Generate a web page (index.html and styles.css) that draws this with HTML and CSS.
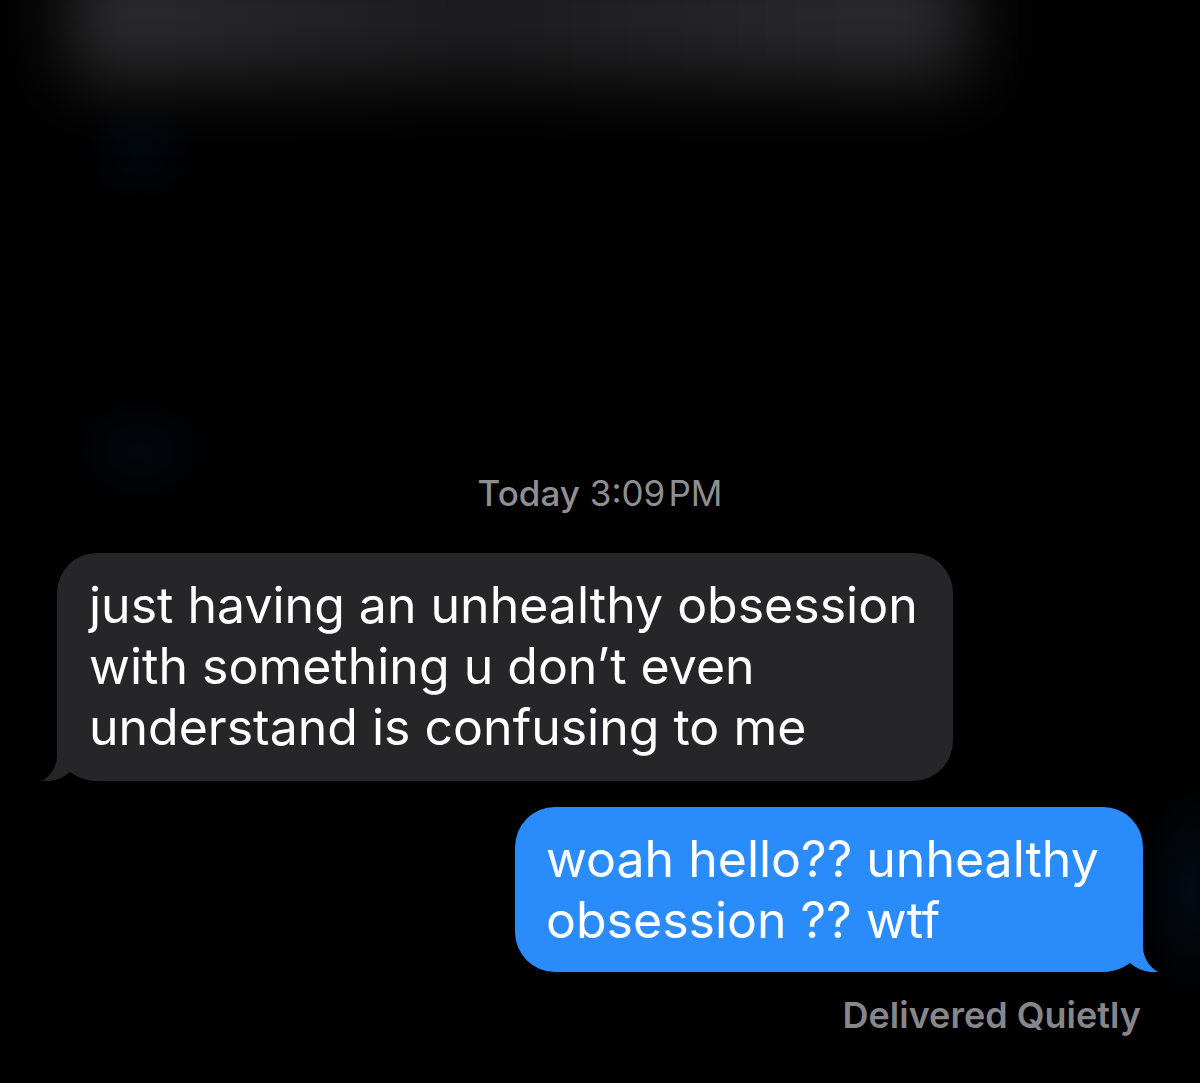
FILE: index.html
```html
<!DOCTYPE html>
<html lang="en">
<head>
    <meta charset="UTF-8">
    <meta name="viewport" content="width=device-width, initial-scale=1.0">
    <title>Messages</title>
    <link rel="stylesheet" href="styles.css">
</head>
<body>

    <div class="chat">
        <!-- blurred header behind the thread -->
        <div class="top-blur"></div>

        <div class="stamp"><span class="stamp-day">Today</span> 3:09&#8202;PM</div>

        <div class="bubble bubble-in">
            <svg class="tail tail-in" width="60" height="51" viewBox="0 0 60 51">
                <path d="M17 0 L17 25 C17 38 10 46 2 51 C12 52 22 49 30 42 C38 48 48 51 60 51 L60 0 Z"/>
            </svg>
            <span class="text">just having an unhealthy obsession<br>
            with something u don’t even<br>
            understand is confusing to me</span>
        </div>

        <div class="bubble bubble-out">
            <svg class="tail tail-out" width="60" height="51" viewBox="0 0 60 51">
                <path d="M17 0 L17 25 C17 38 10 46 2 51 C12 52 22 49 30 42 C38 48 48 51 60 51 L60 0 Z"/>
            </svg>
            <span class="text">woah hello?? unhealthy<br>
            obsession ?? wtf</span>
        </div>

        <div class="delivered">Delivered Quietly</div>
    </div>

</body>
</html>
```

FILE: styles.css
```css
html, body {
    margin: 0;
    height: 100%;
}

body {
    font-family: Inter, "Liberation Sans", Arial, sans-serif;
    background-color: #000;
    background-image:
        radial-gradient(ellipse 60px 55px at 140px 150px, rgba(10, 40, 80, 0.18), transparent),
        radial-gradient(ellipse 70px 55px at 140px 450px, rgba(10, 40, 80, 0.18), transparent),
        radial-gradient(ellipse 50px 110px at 1190px 890px, rgba(20, 60, 110, 0.18), transparent);
    overflow: hidden;
}

.chat {
    display: flex;
    flex-direction: column;
}

.top-blur {
    height: 130px;
    margin: -50px 230px 0 70px;
    background: linear-gradient(to right, #2e2e30, #1d1d1f 45%, #2a2a2c 85%);
    filter: blur(36px);
}

.stamp {
    margin-top: 393px;
    height: 40px;
    line-height: 40px;
    text-align: center;
    font-size: 35px;
    color: #8e8e93;
}

.stamp-day {
    font-weight: 500;
}

.bubble {
    position: relative;
    box-sizing: border-box;
    font-size: 50px;
    line-height: 61px;
    color: #fff;
    border-radius: 40px;
}

.bubble .text {
    position: relative;
}

.bubble-in {
    margin: 40px 0 0 57px;
    width: 896px;
    height: 228px;
    padding: 22px 30px 0 32px;
    background-color: #262628;
}

.bubble-out {
    margin: 26px 57px 0 auto;
    width: 628px;
    height: 165px;
    padding: 22px 30px 0 31px;
    background-color: #2a8cfb;
}

.tail {
    position: absolute;
    bottom: 0;
}

.tail-in {
    left: -17px;
    fill: #262628;
}

.tail-out {
    right: -17px;
    fill: #2a8cfb;
    transform: scaleX(-1);
}

.delivered {
    margin-top: 23px;
    padding-right: 59px;
    height: 40px;
    line-height: 40px;
    text-align: right;
    font-size: 36px;
    font-weight: 600;
    color: #86868b;
}
```
